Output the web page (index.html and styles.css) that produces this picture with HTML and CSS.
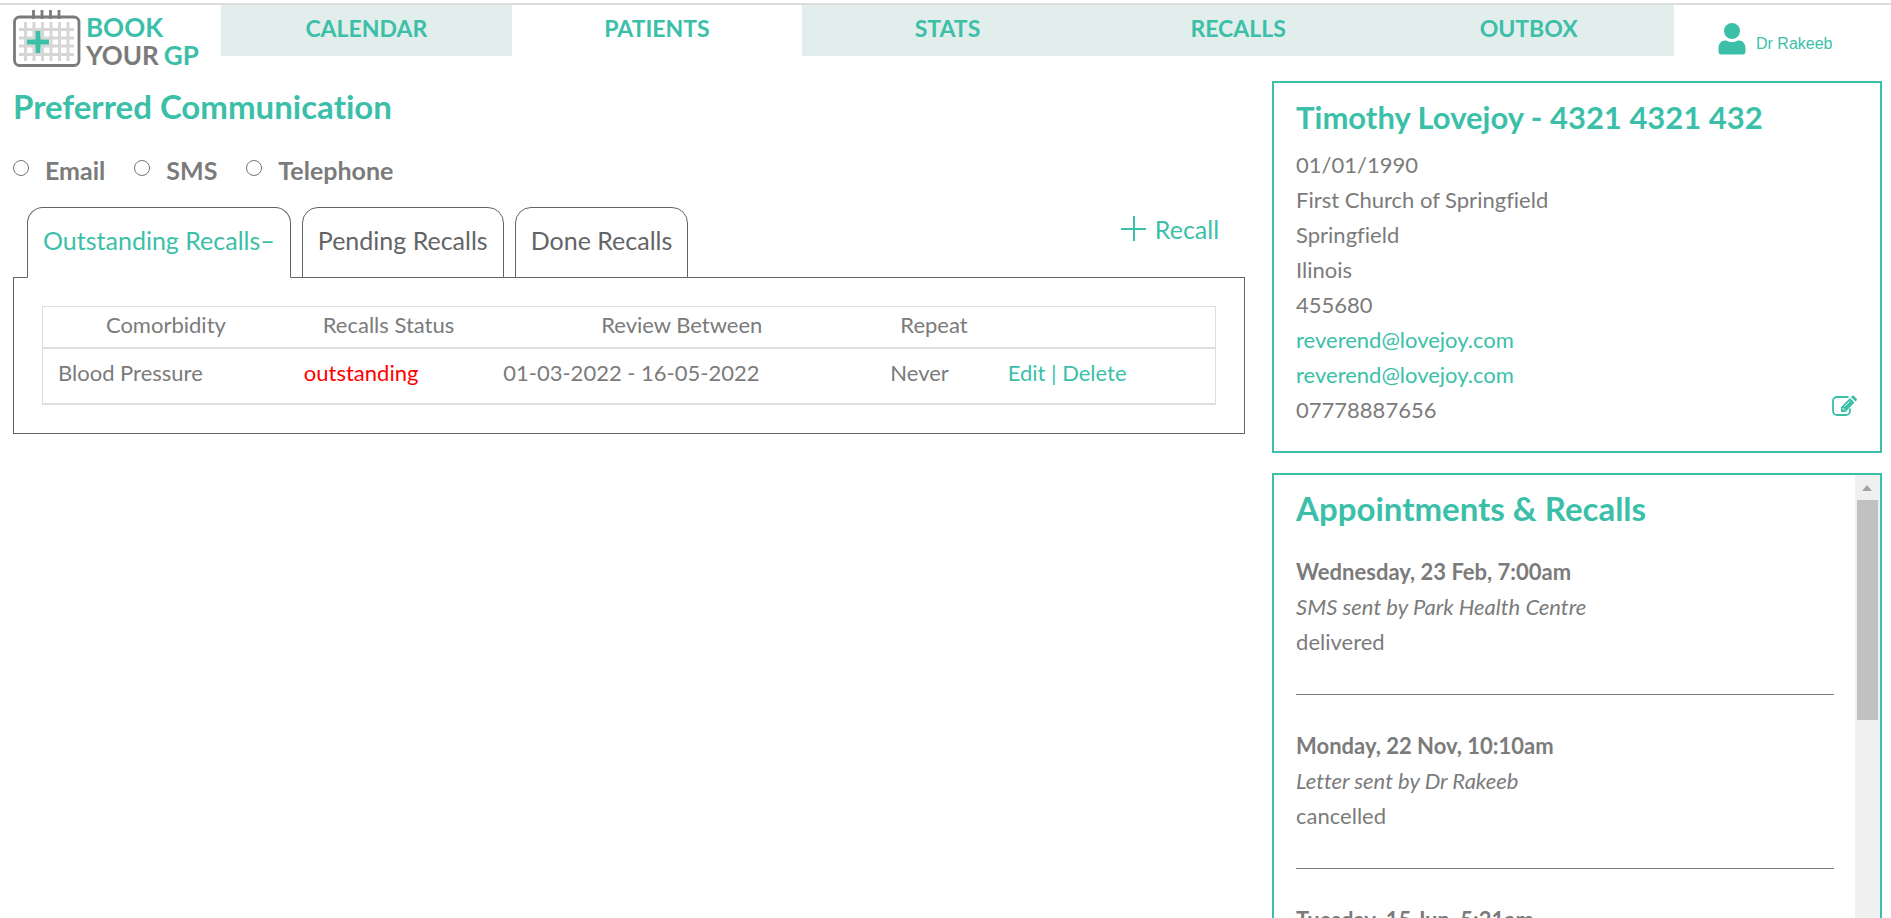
FILE: index.html
```
<!DOCTYPE html>
<html lang="en">
<head>
    <meta charset="UTF-8">
    <meta name="viewport" content="width=device-width, initial-scale=1.0">
    <title>Book Your GP - Patients</title>
    <link rel="stylesheet" href="styles.css">
</head>
<body>
    <header class="header">
        <a href="#" class="logo">
            <svg class="logo-icon" width="68" height="57" viewBox="0 0 68 57">
                <g stroke="#d6d6d6" stroke-width="3">
                    <path d="M12.5 12v39M21 12v39M29.5 12v39M38 12v39M46.5 12v39M55 12v39"/>
                    <path d="M6 19.5h55M6 28h55M6 36h55M6 44.5h55"/>
                </g>
                <rect x="1.5" y="7" width="64.5" height="48.5" rx="5" fill="none" stroke="#7b7b7b" stroke-width="2.8"/>
                <path d="M20.5 0v9M29 0v9M37.5 0v9M46 0v9" stroke="#7b7b7b" stroke-width="2.8"/>
                <path d="M14 32h22M25 21v22" stroke="#3bbfa9" stroke-width="5"/>
            </svg>
            <span class="logo-text">
                <span class="green">BOOK</span>
                <span class="logo-row"><span>YOUR</span><span class="green">GP</span></span>
            </span>
        </a>
        <nav class="nav">
            <a href="#">CALENDAR</a>
            <a href="#" class="active">PATIENTS</a>
            <a href="#">STATS</a>
            <a href="#">RECALLS</a>
            <a href="#">OUTBOX</a>
        </nav>
        <a href="#" class="user">
            <svg width="28" height="32" viewBox="0 0 28 32" fill="#3bbfa9">
                <circle cx="14" cy="8" r="8"/>
                <path d="M7 17.5C9 17.5 10 19 14 19s5-1.5 7-1.5c4 0 6.5 3.5 6.5 8V28.5a3 3 0 0 1-3 3h-21a3 3 0 0 1-3-3V25.5c0-4.5 2.5-8 6.5-8z"/>
            </svg>
            <span>Dr Rakeeb</span>
        </a>
    </header>

    <main class="page">
        <section class="left">
            <h2>Preferred Communication</h2>
            <form class="communication">
                <label><input type="radio" name="communication" value="email"> Email</label>
                <label><input type="radio" name="communication" value="sms"> SMS</label>
                <label><input type="radio" name="communication" value="telephone"> Telephone</label>
            </form>

            <div class="tabs">
                <button type="button" class="tab active">Outstanding Recalls–</button>
                <button type="button" class="tab">Pending Recalls</button>
                <button type="button" class="tab">Done Recalls</button>
                <button type="button" class="add-recall">
                    <svg width="26" height="26" viewBox="0 0 26 26">
                        <path d="M0 13h25M13 0v25" stroke="#3bbfa9" stroke-width="2"/>
                    </svg>
                    Recall
                </button>
            </div>

            <div class="panel">
                <table class="recalls">
                    <thead>
                        <tr>
                            <th class="col-name">Comorbidity</th>
                            <th class="col-status">Recalls Status</th>
                            <th class="col-review">Review Between</th>
                            <th class="col-repeat">Repeat</th>
                            <th></th>
                        </tr>
                    </thead>
                    <tbody>
                        <tr>
                            <td>Blood Pressure</td>
                            <td class="outstanding">outstanding</td>
                            <td>01-03-2022 - 16-05-2022</td>
                            <td>Never</td>
                            <td class="green"><a href="#">Edit</a> | <a href="#">Delete</a></td>
                        </tr>
                    </tbody>
                </table>
            </div>
        </section>

        <aside class="right">
            <section class="card patient">
                <div>
                    <h2>Timothy Lovejoy - 4321 4321 432</h2>
                    <p>01/01/1990</p>
                    <p>First Church of Springfield</p>
                    <p>Springfield</p>
                    <p>Ilinois</p>
                    <p>455680</p>
                    <p><a href="mailto:reverend@lovejoy.com">reverend@lovejoy.com</a></p>
                    <p><a href="mailto:reverend@lovejoy.com">reverend@lovejoy.com</a></p>
                    <p>07778887656</p>
                </div>
                <button type="button" class="edit" aria-label="Edit patient">
                    <svg width="26" height="22" viewBox="0 0 26 22">
                        <path d="M16.5 2H5a4 4 0 0 0-4 4v10a4 4 0 0 0 4 4h9a4 4 0 0 0 4-4v-2.5" fill="none" stroke="#3bbfa9" stroke-width="1.8"/>
                        <path d="M9 17v-5L18 3l4.5 4.5L13.5 17zM19 2l1-1q1-1 2 0l2.5 2.5q1 1 0 2l-1 1z" fill="#3bbfa9"/>
                        <path d="M10.5 13l2.2 2.3M12.5 11.5l5-5" stroke="#fff" stroke-width="1"/>
                    </svg>
                </button>
            </section>

            <section class="card appointments">
                <div class="entries">
                    <h2>Appointments &amp; Recalls</h2>
                    <article class="entry">
                        <h3>Wednesday, 23 Feb, 7:00am</h3>
                        <p><em>SMS sent by Park Health Centre</em></p>
                        <p>delivered</p>
                    </article>
                    <article class="entry">
                        <h3>Monday, 22 Nov, 10:10am</h3>
                        <p><em>Letter sent by Dr Rakeeb</em></p>
                        <p>cancelled</p>
                    </article>
                    <article class="entry">
                        <h3>Tuesday, 15 Jun, 5:21am</h3>
                    </article>
                </div>
                <div class="scrollbar">
                    <svg class="scroll-arrow" width="10" height="6" viewBox="0 0 10 6" fill="#a3a3a3">
                        <path d="M0 6l5-6 5 6z"/>
                    </svg>
                    <div class="scroll-thumb"></div>
                </div>
            </section>
        </aside>
    </main>
</body>
</html>
```

FILE: styles.css
```
* {
    box-sizing: border-box;
}

body {
    display: flex;
    flex-direction: column;
    height: 100vh;
    margin: 0;
    padding-top: 3px;
    overflow: hidden;
    font-family: Lato, sans-serif;
    font-size: 22px;
    line-height: 35px;
    font-variant-ligatures: none;
    color: #7b7b7b;
    background-color: #fff;
}

a {
    color: #3bbfa9;
    text-decoration: none;
}

button {
    font: inherit;
    border: none;
    background: none;
    cursor: pointer;
}

h2, h3, p {
    margin: 0;
}

h2 {
    font-size: 33px;
    line-height: 40px;
    color: #3bbfa9;
}

h3 {
    font-size: 22px;
}

.green {
    color: #3bbfa9;
}

/* Header */
.header {
    display: flex;
    align-items: flex-start;
    border-top: 2px solid #dcdcdc;
}

.logo {
    display: flex;
    gap: 5px;
    width: 221px;
    padding: 5px 0 0 13px;
    color: #7b7b7b;
}

.logo-text {
    display: flex;
    flex-direction: column;
    padding-top: 3px;
    font-size: 26px;
    font-weight: bold;
    line-height: 28px;
}

.logo-row {
    display: flex;
    gap: 5px;
}

.nav {
    display: flex;
    flex: 1;
}

.nav a {
    flex: 1;
    padding: 6px 0 10px;
    font-size: 23px;
    font-weight: bold;
    text-align: center;
    background-color: #e2eeeb;
}

.nav a.active {
    background-color: #fff;
}

.user {
    display: flex;
    align-items: flex-end;
    gap: 10px;
    width: 217px;
    padding: 18px 0 0 44px;
    font-family: "Liberation Sans", Arial, sans-serif;
    font-size: 16px;
}

.user svg {
    margin-bottom: 6px;
}

/* Page */
.page {
    display: grid;
    grid-template-columns: minmax(0, 2.02fr) minmax(0, 1fr);
    gap: 27px;
    margin-top: -3px;
    padding: 10px 9px 0 13px;
}

.left h2 {
    padding-top: 10px;
}

.communication {
    display: flex;
    gap: 29px;
    margin-top: 27px;
}

.communication label {
    display: flex;
    gap: 16px;
    font-size: 25px;
    font-weight: bold;
}

.communication input {
    width: 16px;
    height: 16px;
    margin: 7px 0 0;
}

.tabs {
    display: flex;
    gap: 11px;
    margin-top: 19px;
    padding: 0 26px 0 14px;
}

.tab {
    position: relative;
    height: 71px;
    margin-bottom: -1px;
    padding: 0 15px 5px;
    font-size: 25px;
    color: #636466;
    background-color: #fff;
    border: 1px solid #636466;
    border-radius: 16px 16px 0 0;
}

.tab.active {
    color: #3bbfa9;
    border-bottom-color: #fff;
}

.add-recall {
    display: flex;
    align-items: center;
    gap: 8px;
    height: 44px;
    margin-left: auto;
    padding: 0;
    font-size: 25px;
    color: #3bbfa9;
}

.panel {
    padding: 28px;
    border: 1px solid #636466;
}

.recalls {
    width: 100%;
    border-collapse: collapse;
    table-layout: fixed;
    border: 1px solid #dedede;
}

.recalls th {
    padding: 0 15px 5px;
    font-weight: normal;
    border-bottom: 2px solid #dedede;
}

.recalls td {
    padding: 6px 15px 13px;
    border-bottom: 2px solid #dedede;
}

.col-name {
    width: 21%;
}

.col-status {
    width: 17%;
}

.col-review {
    width: 33%;
}

.col-repeat {
    width: 10%;
}

.recalls .outstanding {
    color: #f00;
}

/* Right column */
.right {
    display: flex;
    flex-direction: column;
    gap: 20px;
    padding-top: 5px;
}

.card {
    border: 2px solid #3bbfa9;
}

.patient {
    display: flex;
    align-items: flex-end;
    justify-content: space-between;
    padding: 14px 22px 24px;
}

.patient h2 {
    margin-bottom: 10px;
    font-size: 31px;
}

.edit {
    display: flex;
    padding: 0 0 10px;
}

.appointments {
    display: flex;
    height: 60vh;
}

.entries {
    flex: 1;
    padding: 13px 21px 0 22px;
    overflow: hidden;
}

.entries h2 {
    margin-bottom: 26px;
}

.entry {
    padding-bottom: 35px;
    margin-bottom: 33px;
    border-bottom: 1px solid #7b7b7b;
}

.scrollbar {
    display: flex;
    flex-direction: column;
    align-items: center;
    gap: 9px;
    width: 25px;
    padding: 10px 2px 0;
    background-color: #f0f0f0;
}

.scroll-thumb {
    width: 100%;
    height: 41%;
    background-color: #c1c1c1;
}
```
